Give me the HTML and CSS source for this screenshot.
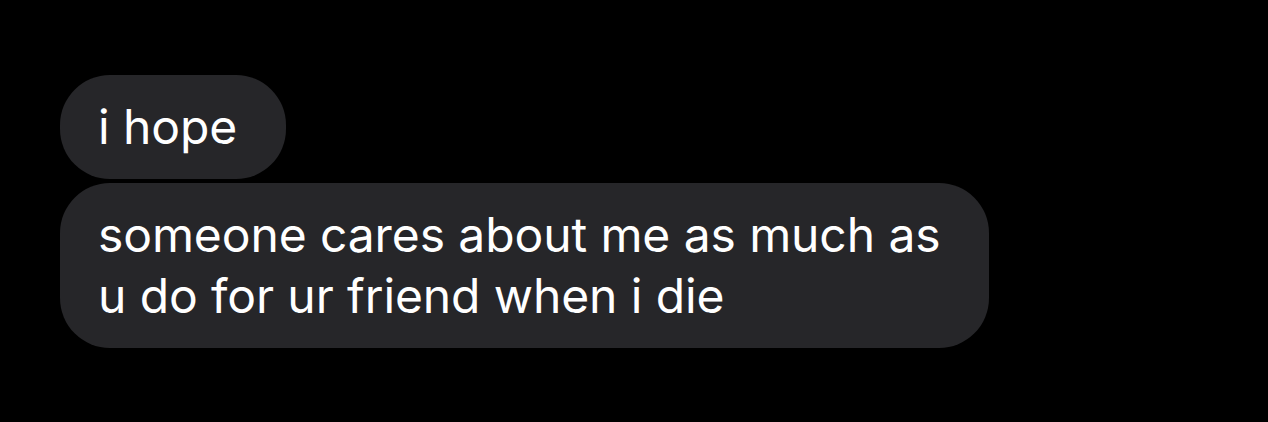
FILE: index.html
```html
<!DOCTYPE html>
<html>
<head>
<meta charset="utf-8">
<link rel="stylesheet" href="styles.css">
</head>
<body>
<div class="thread">
  <div class="bubble">i hope</div>
  <div class="bubble">someone cares about me as much as<br>u do for ur friend when i die</div>
</div>
</body>
</html>
```
FILE: styles.css
```css
html, body {
  margin: 0;
  padding: 0;
  background: #000;
  height: 100%;
}
.thread {
  display: flex;
  flex-direction: column;
  align-items: flex-start;
  gap: 4px;
  padding: 75px 0 0 60px;
}
.bubble {
  background: #262629;
  color: #fff;
  font-family: Inter, "Noto Sans", sans-serif;
  font-size: 48px;
  letter-spacing: -0.1px;
  line-height: 61px;
  padding: 21px 49px 22px 38px;
  border-radius: 50px;
  white-space: nowrap;
}
```
